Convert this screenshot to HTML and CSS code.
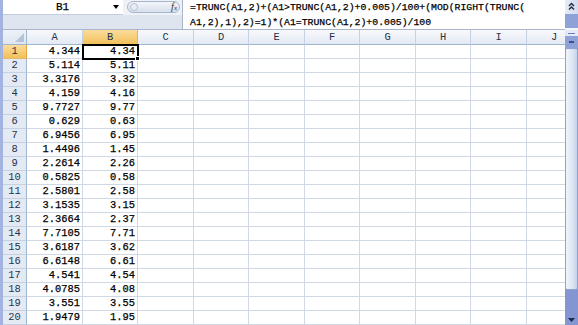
FILE: index.html
```html
<!DOCTYPE html>
<html>
<head>
<meta charset="utf-8">
<link rel="stylesheet" href="styles.css">
</head>
<body>
<div class="window">
  <div class="edge"></div>
  <div class="main">
    <div class="fbar">
      <div class="left">
        <div class="toprow">
          <div class="namebox"><span class="name">B1</span><span class="dd"></span></div>
          <div class="pillwrap"><div class="pill"><span class="knob"></span><span class="fx">f<span class="x">x</span></span></div></div>
        </div>
      </div>
      <div class="formula">=TRUNC(A1,2)+(A1&gt;TRUNC(A1,2)+0.005)/100+(MOD(RIGHT(TRUNC(<br>A1,2),1),2)=1)*(A1=TRUNC(A1,2)+0.005)/100</div>
    </div>
    <div class="sheet">
      <div class="row hdr">
        <div class="corner"></div>
        <div class="ch">A</div><div class="ch sel">B</div><div class="ch">C</div><div class="ch">D</div><div class="ch">E</div><div class="ch">F</div><div class="ch">G</div><div class="ch">H</div><div class="ch">I</div><div class="ch">J</div>
      </div>
      <div class="row"><div class="rh sel">1</div><div class="c">4.344</div><div class="c active">4.34</div><div class="c"></div><div class="c"></div><div class="c"></div><div class="c"></div><div class="c"></div><div class="c"></div><div class="c"></div><div class="c"></div></div>
      <div class="row"><div class="rh">2</div><div class="c">5.114</div><div class="c">5.11</div><div class="c"></div><div class="c"></div><div class="c"></div><div class="c"></div><div class="c"></div><div class="c"></div><div class="c"></div><div class="c"></div></div>
      <div class="row"><div class="rh">3</div><div class="c">3.3176</div><div class="c">3.32</div><div class="c"></div><div class="c"></div><div class="c"></div><div class="c"></div><div class="c"></div><div class="c"></div><div class="c"></div><div class="c"></div></div>
      <div class="row"><div class="rh">4</div><div class="c">4.159</div><div class="c">4.16</div><div class="c"></div><div class="c"></div><div class="c"></div><div class="c"></div><div class="c"></div><div class="c"></div><div class="c"></div><div class="c"></div></div>
      <div class="row"><div class="rh">5</div><div class="c">9.7727</div><div class="c">9.77</div><div class="c"></div><div class="c"></div><div class="c"></div><div class="c"></div><div class="c"></div><div class="c"></div><div class="c"></div><div class="c"></div></div>
      <div class="row"><div class="rh">6</div><div class="c">0.629</div><div class="c">0.63</div><div class="c"></div><div class="c"></div><div class="c"></div><div class="c"></div><div class="c"></div><div class="c"></div><div class="c"></div><div class="c"></div></div>
      <div class="row"><div class="rh">7</div><div class="c">6.9456</div><div class="c">6.95</div><div class="c"></div><div class="c"></div><div class="c"></div><div class="c"></div><div class="c"></div><div class="c"></div><div class="c"></div><div class="c"></div></div>
      <div class="row"><div class="rh">8</div><div class="c">1.4496</div><div class="c">1.45</div><div class="c"></div><div class="c"></div><div class="c"></div><div class="c"></div><div class="c"></div><div class="c"></div><div class="c"></div><div class="c"></div></div>
      <div class="row"><div class="rh">9</div><div class="c">2.2614</div><div class="c">2.26</div><div class="c"></div><div class="c"></div><div class="c"></div><div class="c"></div><div class="c"></div><div class="c"></div><div class="c"></div><div class="c"></div></div>
      <div class="row"><div class="rh">10</div><div class="c">0.5825</div><div class="c">0.58</div><div class="c"></div><div class="c"></div><div class="c"></div><div class="c"></div><div class="c"></div><div class="c"></div><div class="c"></div><div class="c"></div></div>
      <div class="row"><div class="rh">11</div><div class="c">2.5801</div><div class="c">2.58</div><div class="c"></div><div class="c"></div><div class="c"></div><div class="c"></div><div class="c"></div><div class="c"></div><div class="c"></div><div class="c"></div></div>
      <div class="row"><div class="rh">12</div><div class="c">3.1535</div><div class="c">3.15</div><div class="c"></div><div class="c"></div><div class="c"></div><div class="c"></div><div class="c"></div><div class="c"></div><div class="c"></div><div class="c"></div></div>
      <div class="row"><div class="rh">13</div><div class="c">2.3664</div><div class="c">2.37</div><div class="c"></div><div class="c"></div><div class="c"></div><div class="c"></div><div class="c"></div><div class="c"></div><div class="c"></div><div class="c"></div></div>
      <div class="row"><div class="rh">14</div><div class="c">7.7105</div><div class="c">7.71</div><div class="c"></div><div class="c"></div><div class="c"></div><div class="c"></div><div class="c"></div><div class="c"></div><div class="c"></div><div class="c"></div></div>
      <div class="row"><div class="rh">15</div><div class="c">3.6187</div><div class="c">3.62</div><div class="c"></div><div class="c"></div><div class="c"></div><div class="c"></div><div class="c"></div><div class="c"></div><div class="c"></div><div class="c"></div></div>
      <div class="row"><div class="rh">16</div><div class="c">6.6148</div><div class="c">6.61</div><div class="c"></div><div class="c"></div><div class="c"></div><div class="c"></div><div class="c"></div><div class="c"></div><div class="c"></div><div class="c"></div></div>
      <div class="row"><div class="rh">17</div><div class="c">4.541</div><div class="c">4.54</div><div class="c"></div><div class="c"></div><div class="c"></div><div class="c"></div><div class="c"></div><div class="c"></div><div class="c"></div><div class="c"></div></div>
      <div class="row"><div class="rh">18</div><div class="c">4.0785</div><div class="c">4.08</div><div class="c"></div><div class="c"></div><div class="c"></div><div class="c"></div><div class="c"></div><div class="c"></div><div class="c"></div><div class="c"></div></div>
      <div class="row"><div class="rh">19</div><div class="c">3.551</div><div class="c">3.55</div><div class="c"></div><div class="c"></div><div class="c"></div><div class="c"></div><div class="c"></div><div class="c"></div><div class="c"></div><div class="c"></div></div>
      <div class="row"><div class="rh">20</div><div class="c">1.9479</div><div class="c">1.95</div><div class="c"></div><div class="c"></div><div class="c"></div><div class="c"></div><div class="c"></div><div class="c"></div><div class="c"></div><div class="c"></div></div>
    </div>
  </div>
  <div class="vbar">
    <div class="expand">
      <svg class="chev" width="13" height="13" viewBox="0 0 13 13"><path d="M4 6 L6.5 3.5 L9 6 M4 9.5 L6.5 7 L9 9.5" fill="none" stroke="#1e2a40" stroke-width="1.4"/></svg>
    </div>
    <div class="expand-lo"></div>
    <div class="sep"></div>
    <div class="split"><span class="sline"></span></div>
    <div class="upbtn"><span class="dash"></span></div>
    <div class="thumb"></div>
    <div class="track">
      <svg class="darrow" width="7" height="4" viewBox="0 0 7 4"><path d="M0 0 H7 L3.5 4 Z" fill="#1e2a50"/></svg>
    </div>
  </div>
</div>
</body>
</html>
```

FILE: styles.css
```css
html, body {
  margin: 0;
  padding: 0;
}
body {
  width: 578px;
  height: 325px;
  overflow: hidden;
  background: #fff;
  font-family: "Liberation Mono", "DejaVu Sans Mono", monospace;
  font-size: 10px;
  color: #000;
}
.window {
  display: flex;
  height: 325px;
}
.edge {
  width: 3px;
  flex: none;
  background: #a3b3df;
}
.main {
  width: 562px;
  flex: none;
  display: flex;
  flex-direction: column;
  overflow: hidden;
}

/* formula bar */
.fbar {
  height: 30px;
  flex: none;
  box-sizing: border-box;
  display: flex;
  background: #dfe5ef;
  border-bottom: 1px solid #a9b5cb;
}
.left {
  width: 179px;
  flex: none;
}
.toprow {
  display: flex;
  height: 15px;
}
.namebox {
  width: 120px;
  flex: none;
  box-sizing: border-box;
  background: #fff;
  border-bottom: 1px solid #c3cddd;
  display: flex;
  align-items: center;
}
.name {
  flex: 1;
  text-align: center;
  padding-left: 9px;
  font-size: 11px;
  line-height: 14px;
  -webkit-text-stroke: 0.25px #000;
}
.dd {
  width: 0;
  height: 0;
  border-left: 3px solid transparent;
  border-right: 3px solid transparent;
  border-top: 4px solid #000;
  margin-right: 4px;
}
.pillwrap {
  flex: 1;
  padding: 1px 2px 0 4px;
  background: #eef1f6;
}
.pill {
  height: 12px;
  box-sizing: border-box;
  border: 1px solid #a7b5cd;
  border-radius: 7px;
  background: linear-gradient(#f3f6fa, #d7dfeb);
  display: flex;
  align-items: center;
  justify-content: space-between;
  padding: 0 2px 0 2px;
}
.knob {
  width: 8px;
  height: 8px;
  border-radius: 50%;
  border: 1px solid #b5c1d4;
  background: #e8edf4;
  box-sizing: border-box;
}
.fx {
  font-family: "Liberation Serif", serif;
  font-style: italic;
  font-size: 10px;
  line-height: 10px;
  color: #333;
}
.fx .x {
  font-size: 7px;
}
.formula {
  flex: 1;
  background: #fff;
  border-left: 1px solid #a9b5cb;
  padding-left: 7px;
  line-height: 15px;
  font-size: 9.8px;
  white-space: nowrap;
  overflow: hidden;
  -webkit-text-stroke: 0.25px #000;
}

/* sheet */
.sheet {
  flex: 1;
  overflow: hidden;
}
.row {
  display: grid;
  grid-template-columns: 24px 56px 55px 56px 55px 56px 55px 56px 55px 56px 55px;
  height: 14px;
  font-size: 10.4px;
}
.row > div {
  box-sizing: border-box;
  border-right: 1px solid #d0d7e5;
  border-bottom: 1px solid #d0d7e5;
}
.row.hdr {
  height: 15px;
}
.row.hdr > div {
  border-right: 1px solid #c5d1e2;
  border-bottom: 1px solid #9eb6ce;
  background: linear-gradient(#f8f9fc, #e3e9f3);
  text-align: center;
  line-height: 14px;
  color: #25324a;
}
.row.hdr > .ch.sel {
  background: linear-gradient(#fbdc9c, #f2c05a);
  border-bottom-color: #e5a53a;
  border-right-color: #e6b160;
}
.row.hdr > .corner {
  position: relative;
  border-right: 1px solid #9eb6ce;
  background: linear-gradient(#eef2f8, #dfe6f1);
}
.corner::after {
  content: "";
  position: absolute;
  right: 2px;
  bottom: 2px;
  width: 0;
  height: 0;
  border-left: 9px solid transparent;
  border-bottom: 9px solid #b4c3da;
}
.row > .rh {
  background: #e4eaf4;
  border-right: 1px solid #9eb6ce;
  border-bottom: 1px solid #c5d1e2;
  text-align: center;
  line-height: 13px;
  color: #25324a;
}
.row > .rh.sel {
  background: linear-gradient(#fbdc9c, #f2c05a);
  border-bottom-color: #e5b86a;
  border-right-color: #e5a53a;
}
.c {
  text-align: right;
  padding-right: 2px;
  line-height: 13px;
  white-space: nowrap;
  -webkit-text-stroke: 0.25px #000;
}
.c.active {
  position: relative;
  outline: 2px solid #000;
  outline-offset: -1px;
  z-index: 1;
}
.c.active::after {
  content: "";
  position: absolute;
  right: -3px;
  bottom: -3px;
  width: 5px;
  height: 5px;
  background: #000;
  border: 1px solid #fff;
  box-sizing: border-box;
}

/* vertical bar */
.vbar {
  width: 13px;
  flex: none;
  display: flex;
  flex-direction: column;
  background: #8a9dd5;
}
.expand {
  height: 14px;
  background: linear-gradient(90deg, #e6ecf7, #d3ddef);
  display: flex;
  justify-content: center;
}
.expand-lo {
  height: 14px;
  background: #8fa2d7;
}
.sep {
  height: 2px;
  background: #f4f6fb;
}
.split {
  height: 6px;
  background: #e3eaf6;
  display: flex;
  align-items: center;
  justify-content: center;
}
.sline {
  width: 7px;
  height: 1px;
  background: #6b7fb8;
}
.upbtn {
  height: 12px;
  background: #8fa2d7;
  display: flex;
  align-items: center;
  justify-content: center;
}
.dash {
  width: 5px;
  height: 2px;
  background: #3a4f8c;
}
.thumb {
  height: 242px;
  box-sizing: border-box;
  border: 1px solid #8ea1cf;
  border-radius: 2px;
  background: linear-gradient(90deg, #f1f5fb, #dce5f3 60%, #c5d2ea);
}
.track {
  flex: 1;
  background: #8396d2;
  display: flex;
  align-items: flex-end;
  justify-content: center;
  padding-bottom: 3px;
}
```
